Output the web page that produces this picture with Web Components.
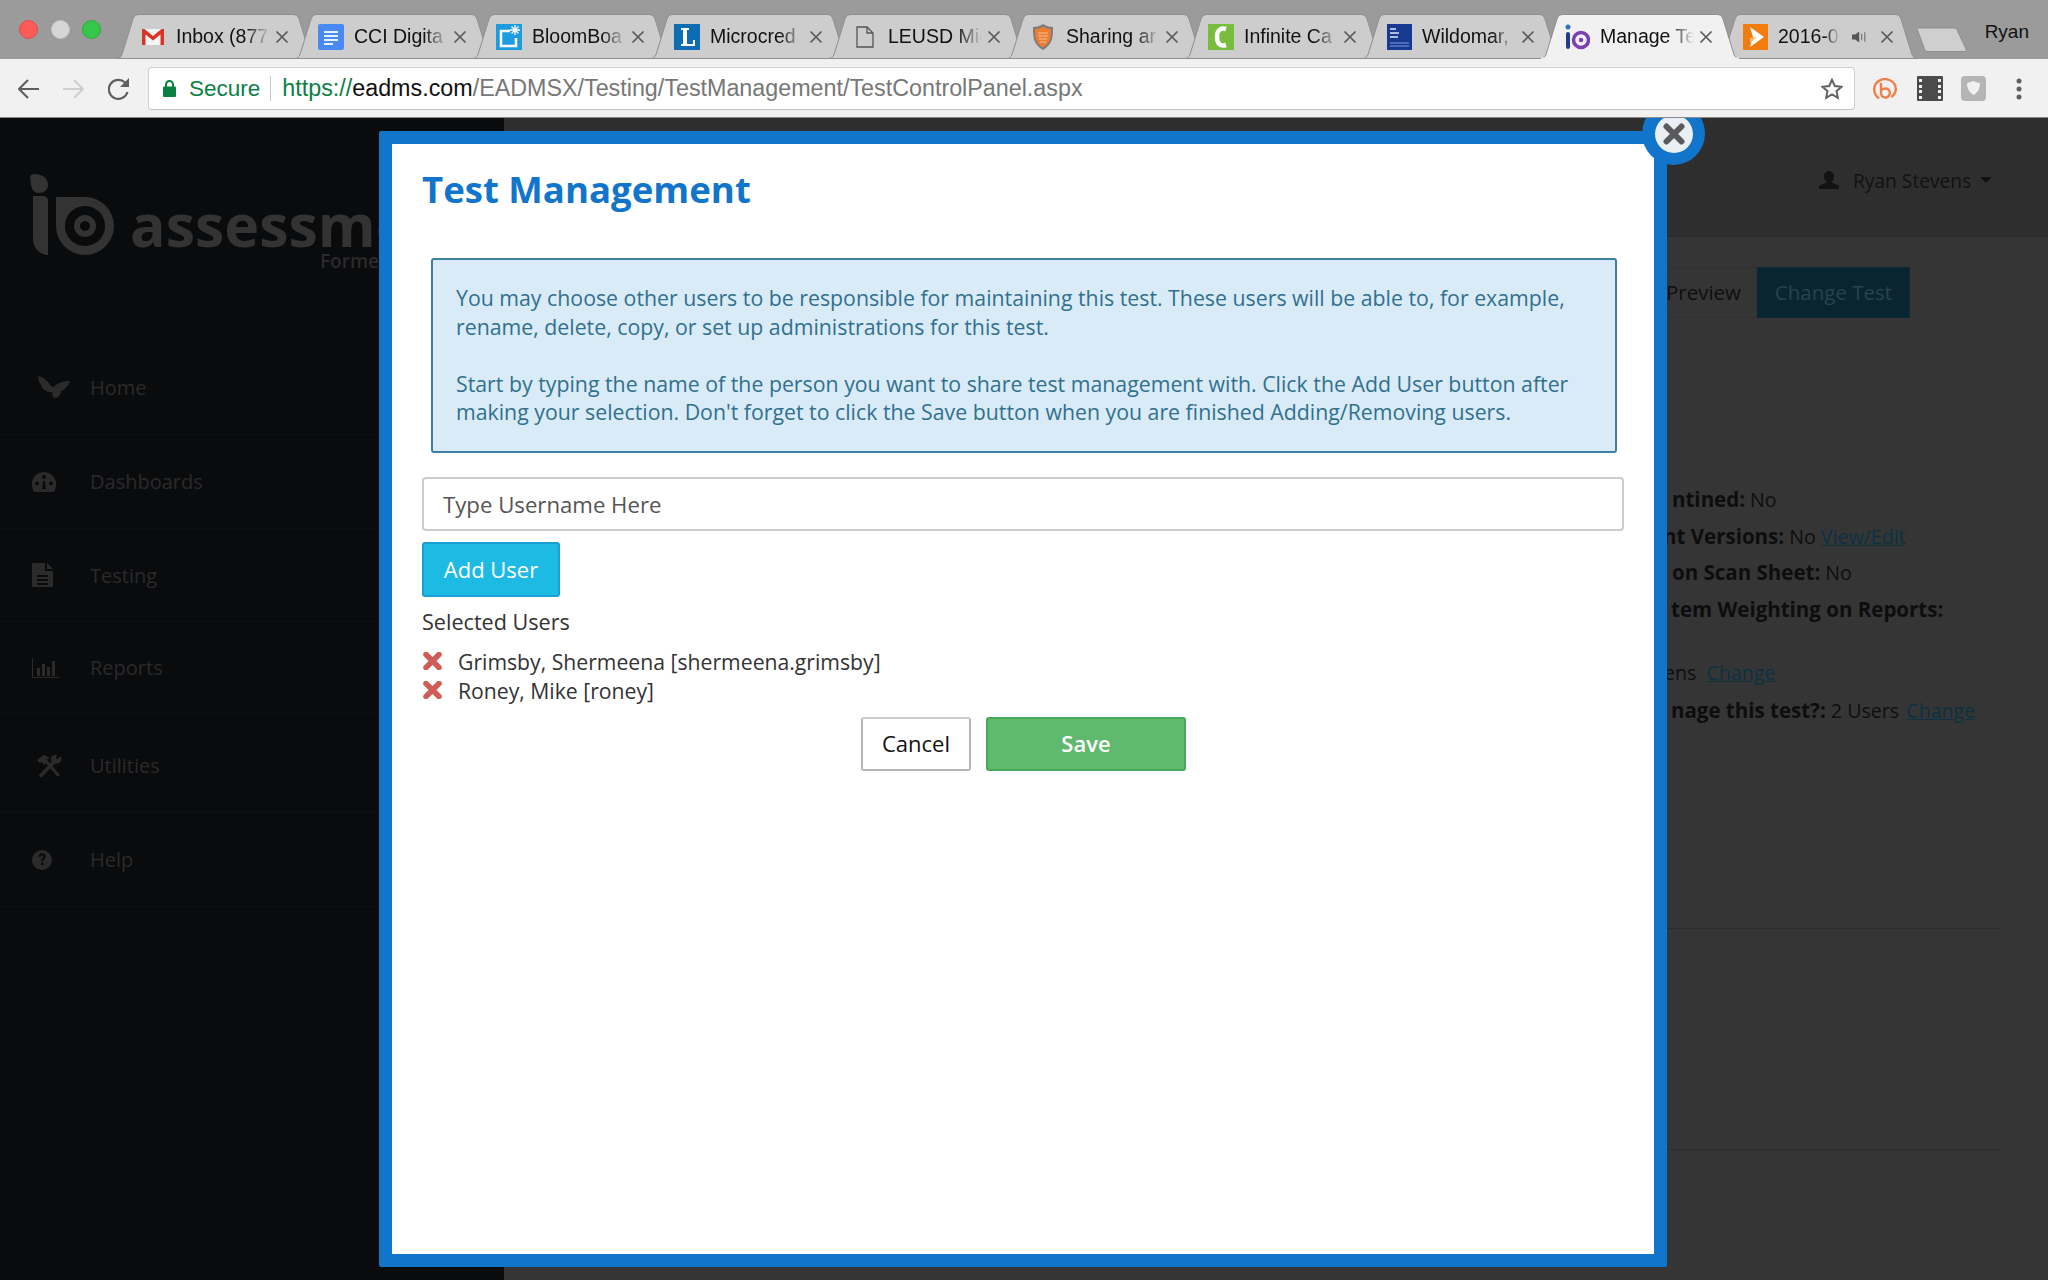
<!DOCTYPE html>
<html>
<head>
<meta charset="utf-8">
<title>Manage Test</title>
<style>
  html, body { margin: 0; padding: 0; width: 2048px; height: 1280px; overflow: hidden; background: #353535; }
  app-page { font-family: "Open Sans", sans-serif; }
</style>
</head>
<body>
<tab-strip>
  <browser-tab label="Inbox (877" icon="gmail"></browser-tab>
  <browser-tab label="CCI Digita" icon="docs"></browser-tab>
  <browser-tab label="BloomBoa" icon="bloom"></browser-tab>
  <browser-tab label="Microcred" icon="micro"></browser-tab>
  <browser-tab label="LEUSD Mic" icon="page"></browser-tab>
  <browser-tab label="Sharing ar" icon="shield"></browser-tab>
  <browser-tab label="Infinite Ca" icon="campus"></browser-tab>
  <browser-tab label="Wildomar," icon="weather"></browser-tab>
  <browser-tab label="Manage Te" icon="io" active></browser-tab>
  <browser-tab label="2016-0" icon="play" audio></browser-tab>
</tab-strip>
<browser-toolbar></browser-toolbar>
<app-page>
  <app-sidebar>
    <nav-item icon="home" h="95">Home</nav-item>
    <nav-item icon="gauge" h="94">Dashboards</nav-item>
    <nav-item icon="file" h="93">Testing</nav-item>
    <nav-item icon="chart" h="92">Reports</nav-item>
    <nav-item icon="tools" h="99" style="padding-top:5px">Utilities</nav-item>
    <nav-item icon="help" h="94">Help</nav-item>
  </app-sidebar>
  <app-main>
    <info-row style="--x:12px"><b>ntined:</b> No</info-row>
    <info-row style="--x:3px"><b>nt Versions:</b> No <a>View/Edit</a></info-row>
    <info-row style="--x:12px"><b>on Scan Sheet:</b> No</info-row>
    <info-row style="--x:11px"><b>tem Weighting on Reports:</b></info-row>
    <info-row style="--x:4px;margin-top:28px">ens&nbsp; <a>Change</a></info-row>
    <info-row style="--x:11px"><b>nage this test?:</b> 2 Users&nbsp; <a style="margin-left:-3px">Change</a></info-row>
  </app-main>
  <test-modal>
    <span slot="title">Test Management</span>
    <p>You may choose other users to be responsible for maintaining this test. These users will be able to, for example,<br>rename, delete, copy, or set up administrations for this test.</p>
    <p>Start by typing the name of the person you want to share test management with. Click the Add User button after<br>making your selection. Don't forget to click the Save button when you are finished Adding/Removing users.</p>
    <user-row slot="users">Grimsby, Shermeena [shermeena.grimsby]</user-row>
    <user-row slot="users">Roney, Mike [roney]</user-row>
  </test-modal>
</app-page>

<script>
const FAVICONS = {
  gmail: `<svg width="24" height="18" viewBox="0 0 24 18"><path d="M1 1h22v16H1z" fill="#f4f4f4"/><path d="M1 17V1h2.500L12 8l8.500-7H23v16h-3.500V6.500L12 12.500 4.500 6.500V17z" fill="#d8352a"/></svg>`,
  docs: `<svg width="26" height="26" viewBox="0 0 26 26"><rect width="26" height="26" rx="2" fill="#4a88f2"/><path d="M6 8h14M6 12h14M6 16h14M6 20h9" stroke="#e8f0fe" stroke-width="2"/></svg>`,
  bloom: `<svg width="26" height="26" viewBox="0 0 26 26"><rect width="26" height="26" fill="#1d9ce0"/><path d="M14 7H5v15h15v-8" fill="none" stroke="#fff" stroke-width="2.500"/><path d="M19 1v10M14 6h10M15.500 2.500l7 7M22.500 2.500l-7 7" stroke="#fff" stroke-width="1.300"/></svg>`,
  micro: `<svg width="26" height="26" viewBox="0 0 26 26"><rect width="26" height="26" fill="#0d6db3"/><path d="M7 4h8v2h-2v14h6v-4h2v6H7v-2h2V6H7z" fill="#fff"/></svg>`,
  page: `<svg width="18" height="22" viewBox="0 0 18 22"><path d="M1 1h10l6 6v14H1zM11 1v6h6" fill="none" stroke="#555" stroke-width="1.300"/></svg>`,
  shield: `<svg width="22" height="26" viewBox="0 0 22 26"><path d="M1 3c4 0 7-1 10-3 3 2 6 3 10 3 0 10 0 17-10 23C1 20 1 13 1 3z" fill="#7b7b7b"/><path d="M3 5c3 0 6-1 8-2.500 2 1.500 5 2.500 8 2.500 0 8 0 14-8 18.500C3 19 3 13 3 5z" fill="#ed7d31"/><path d="M6 9h10M6 12h10M7 15h8M8 18h6" stroke="#f6c29a" stroke-width="1"/></svg>`,
  campus: `<svg width="26" height="26" viewBox="0 0 26 26"><rect width="26" height="26" fill="#79bd3e"/><path d="M18 5c-6-2-9 2-9 8s3 10 9 8" fill="none" stroke="#fff" stroke-width="4.500"/></svg>`,
  weather: `<svg width="25" height="26" viewBox="0 0 25 26"><rect width="25" height="26" fill="#17398f"/><path d="M3 5h6M3 9h9M3 13h8" stroke="#dfe6f7" stroke-width="1.500"/><path d="M3 19h19M3 22h19" stroke="#5f7ccb" stroke-width="1.500"/></svg>`,
  io: `<svg width="25" height="26" viewBox="0 0 25 26"><circle cx="3" cy="3" r="2.500" fill="#2f6fc0"/><rect x="1" y="8" width="4" height="17" rx="2" fill="#263a8c"/><circle cx="16" cy="16" r="7.500" fill="none" stroke="#7a3fb0" stroke-width="3.500"/><circle cx="16" cy="16" r="2.200" fill="#7a3fb0"/></svg>`,
  play: `<svg width="25" height="26" viewBox="0 0 25 26"><rect width="25" height="26" rx="1" fill="#f07d0e"/><path d="M7 3l14 10L7 23l3-10z" fill="#fff"/><path d="M7 14l7-1-7 6z" fill="#f7b77c"/></svg>`
};

const NAV_ICONS = {
  home: `<svg width="32" height="22" viewBox="0 0 32 22" style="margin-left:6px"><path d="M0 0c5 1 10 5 14 11l2 0c3-4 9-6 16-6-2 5-5 9-9 10 0 4-3 7-6 7-2 0-3-3-3-6-5 1-10-3-11-7C1 6 0 3 0 0z" fill="#2b2b2b"/></svg>`,
  gauge: `<svg width="24" height="20" viewBox="0 0 24 20"><path fill-rule="evenodd" d="M12 0a12 12 0 0 1 12 12c0 3-1 6-2 8H2c-1-2-2-5-2-8A12 12 0 0 1 12 0zM5 9.500a2 2 0 1 0 .01 0zM12 3a2 2 0 1 0 .01 0zM19 9.500a2 2 0 1 0 .01 0zM10 17h4l-1-8h-2z" fill="#2b2b2b"/></svg>`,
  file: `<svg width="21" height="24" viewBox="0 0 21 24"><path fill-rule="evenodd" d="M1 0h12v8h8v15a1 1 0 0 1-1 1H1a1 1 0 0 1-1-1V1a1 1 0 0 1 1-1zM5 12v2h11v-2zM5 16v2h11v-2zM5 20v2h11v-2z" fill="#2b2b2b"/><path d="M15 0l6 6h-6z" fill="#2b2b2b"/></svg>`,
  chart: `<svg width="27" height="20" viewBox="0 0 27 20"><path d="M.5 0v19.500H27" fill="none" stroke="#2b2b2b" stroke-width="1"/><path d="M5 10h3v8H5zM10 6h3v12h-3zM15 9h3v9h-3zM20 3h3v15h-3z" fill="#2b2b2b"/></svg>`,
  tools: `<svg width="25" height="22" viewBox="0 0 25 22" style="margin-left:5px"><path d="M4 20.500L16 8" stroke="#2b2b2b" stroke-width="3.500" stroke-linecap="round"/><path d="M21 20L9 6" stroke="#2b2b2b" stroke-width="3" stroke-linecap="round"/><path d="M0 5l7-5 6 3-3 1 1 3-4 3-2-3-2 1z" fill="#2b2b2b"/><path d="M24 1l-3 3-2-1 1-3c-3-.5-6 1-6 4 0 2 .5 3 2 4 2 1 6 1 7.500-1.500C24.500 5 25 3 24 1z" fill="#2b2b2b"/></svg>`,
  help: `<svg width="20" height="20" viewBox="0 0 20 20"><path fill-rule="evenodd" d="M10 0a10 10 0 1 1 0 20 10 10 0 0 1 0-20zM6.500 7h2.300c0-1 .5-1.500 1.300-1.500s1.300.5 1.300 1.200c0 1.500-2.500 1.700-2.500 4.300h2.300c0-1.800 2.600-2.100 2.600-4.500 0-2-1.700-3.300-3.800-3.300C7.900 3.200 6.500 4.800 6.500 7zM9 12.500V15h2.400v-2.500z" fill="#2b2b2b"/></svg>`
};

function render(el, html) {
  el.attachShadow({ mode: 'open' }).innerHTML = html;
}

class TabStrip extends HTMLElement {
  connectedCallback() {
    render(this, `<style>
      :host { display: flex; height: 59px; background: #9b9b9b; padding-left: 116px; box-sizing: border-box; align-items: flex-end; position: relative; font-family: "Liberation Sans", Arial, sans-serif; }
      .lights { position: absolute; left: 19px; top: 20px; display: flex; gap: 12.500px; }
      .lights i { width: 19px; height: 19px; border-radius: 50%; display: block; box-sizing: border-box; }
      .newtab { width: 50px; height: 25px; margin: 0 0 7px 21px; flex: none; }
      .who { position: absolute; right: 19px; top: 20px; font-size: 19px; line-height: 24px; color: #111; }
    </style>
    <div class="lights">
      <i style="background:#fc5b57;border:1px solid #e24b47"></i>
      <i style="background:#d6d6d6;border:1px solid #c4c4c4"></i>
      <i style="background:#35c749;border:1px solid #2cad3d"></i>
    </div>
    <slot></slot>
    <svg class="newtab" viewBox="0 0 50 25"><path d="M1 1h36c2 0 3 1 3.500 3L49 22c.5 2 0 2.500-2 2.500H11c-2 0-3-1-3.500-2.500L.5 3C0 2 0 1 1 1z" fill="#cfcfcf" stroke="#8f8f8f"/></svg>
    <div class="who">Ryan</div>`);
  }
}

class BrowserTab extends HTMLElement {
  connectedCallback() {
    const active = this.hasAttribute('active');
    const audio = this.hasAttribute('audio');
    render(this, `<style>
      :host { display: block; position: relative; width: 200px; height: 45px; margin-right: -22px; flex: none; z-index: ${active ? 2 : 1}; font-size: 19.500px; color: #111; }
      .shape { position: absolute; inset: 0; }
      .row { position: relative; height: 100%; display: flex; align-items: center; padding: 1px 0 0 24px; box-sizing: border-box; }
      .icon { width: 26px; display: flex; justify-content: center; flex: none; margin-right: 10px; }
      .title { width: ${audio ? 66 : 100}px; margin-top: -2px; overflow: hidden; white-space: nowrap; flex: none; -webkit-mask-image: linear-gradient(90deg, #000 70%, transparent 94%); mask-image: linear-gradient(90deg, #000 70%, transparent 94%); }
      .audio { margin-left: 8px; flex: none; display: block; }
      .x { width: 14px; height: 14px; margin-left: ${audio ? 12 : -1}px; flex: none; }
    </style>
    <svg class="shape" viewBox="0 0 200 45" preserveAspectRatio="none">
      <path d="M0 44.500c3 0 5-1 6-4L17 5c1-3 3-4.500 6-4.500h154c3 0 5 1.500 6 4.500l11 35.500c1 3 3 4 6 4z" fill="${active ? '#f1f1f1' : '#cdcdcd'}" stroke="#8f8f8f" stroke-width="1"/>
      ${active ? '<path d="M1 44.500h198" stroke="#f1f1f1" stroke-width="2"/>' : ''}
    </svg>
    <div class="row">
      <span class="icon">${FAVICONS[this.getAttribute('icon')]}</span>
      <span class="title">${this.getAttribute('label')}</span>
      ${audio ? '<svg class="audio" width="16" height="14" viewBox="0 0 20 14"><path d="M0 4h4l5-4v14l-5-4H0z" fill="#555"/><path d="M12 3v8M16 1v12" stroke="#777" stroke-width="1.500"/></svg>' : ''}
      <svg class="x" viewBox="0 0 14 14"><path d="M1.500 1.500l11 11M12.500 1.500l-11 11" stroke="#5a5a5a" stroke-width="1.700"/></svg>
    </div>`);
  }
}

class BrowserToolbar extends HTMLElement {
  connectedCallback() {
    render(this, `<style>
      :host { display: flex; align-items: center; height: 59px; background: #f1f1f1; padding: 1px 0 0 18px; box-sizing: border-box; border-bottom: 1px solid #8a8a8a; font-family: "Liberation Sans", Arial, sans-serif; }
      .nav { display: flex; align-items: center; gap: 22px; flex: none; }
      .nav svg:last-child { margin-left: 2px; }
      .omni { flex: none; width: 1707px; height: 43px; margin-left: 18px; background: #fff; border: 1px solid #cfcfcf; border-bottom-color: #c2c2c2; border-radius: 4px; box-sizing: border-box; display: flex; align-items: center; padding-left: 14px; font-size: 23.300px; white-space: nowrap; }
      .secure { color: #0b8043; margin-left: 13px; font-size: 22.500px; }
      .sep { width: 1px; height: 25px; background: #c9c9c9; margin: 0 11px 0 10px; }
      .https { color: #0b8043; }
      .host { color: #111; }
      .path { color: #777; }
      .star { margin-left: auto; margin-right: 11px; }
      .ext { display: flex; align-items: center; margin-left: 18px; flex: none; }
    </style>
    <div class="nav">
      <svg width="22" height="20" viewBox="0 0 22 20"><path d="M21 10H2M10 1l-9 9 9 9" fill="none" stroke="#5f5f5f" stroke-width="2"/></svg>
      <svg width="22" height="20" viewBox="0 0 22 20"><path d="M1 10h19M12 1l9 9-9 9" fill="none" stroke="#cfcfcf" stroke-width="2"/></svg>
      <svg width="22" height="24" viewBox="0 0 22 24"><path d="M19.500 15a9.500 9.500 0 1 1-2.500-9.500L20 8" fill="none" stroke="#5f5f5f" stroke-width="2.200"/><path d="M21 1v9h-9z" fill="#5f5f5f"/></svg>
    </div>
    <div class="omni">
      <svg width="13" height="17" viewBox="0 0 13 17"><path d="M3 7V4.500a3.500 3.500 0 0 1 7 0V7" fill="none" stroke="#0b8043" stroke-width="2"/><rect y="6.500" width="13" height="10.500" rx="1" fill="#0b8043"/></svg>
      <span class="secure">Secure</span><span class="sep"></span>
      <span><span class="https">https://</span><span class="host">eadms.com</span><span class="path">/EADMSX/Testing/TestManagement/TestControlPanel.aspx</span></span>
      <svg class="star" width="22" height="22" viewBox="0 0 22 22"><path d="M11 1.800l2.800 6.200 6.700.7-5 4.500 1.400 6.600L11 16.400l-5.900 3.400 1.400-6.600-5-4.500 6.700-.7z" fill="none" stroke="#5f5f5f" stroke-width="1.900"/></svg>
    </div>
    <div class="ext">
      <svg width="24" height="22" viewBox="0 0 24 22"><path d="M6 20.500C2.500 18 1.200 15 1.200 11a10.800 9.800 0 1 1 17 8" fill="none" stroke="#ef7f4a" stroke-width="2.400"/><path d="M8 5v11a4.500 4.500 0 1 0 1-4" fill="none" stroke="#ef7f4a" stroke-width="2.400"/></svg>
      <svg style="margin-left:20px" width="26" height="25" viewBox="0 0 26 25"><path fill-rule="evenodd" d="M1 0h24a1 1 0 0 1 1 1v23a1 1 0 0 1-1 1H1a1 1 0 0 1-1-1V1a1 1 0 0 1 1-1zM2 3v3h3V3zM2 9v3h3V9zM2 14v3h3v-3zM2 20v3h3v-3zM21 3v3h3V3zM21 9v3h3V9zM21 14v3h3v-3zM21 20v3h3v-3z" fill="#4b4b4b"/></svg>
      <svg style="margin-left:18px" width="25" height="25" viewBox="0 0 25 25"><rect width="25" height="25" rx="4" fill="#b5b5b5"/><path d="M12.500 5c3 1.500 6 1.500 6.500 2.500 0 5-2 9-6.500 11.500C8 16 6 12 6 7.500 7 6.500 10 6 12.500 5z" fill="#f1f1f1"/></svg>
      <svg style="margin-left:26px" width="14" height="22" viewBox="0 0 14 22"><circle cx="7" cy="3" r="2.500" fill="#5f5f5f"/><circle cx="7" cy="11" r="2.500" fill="#5f5f5f"/><circle cx="7" cy="19" r="2.500" fill="#5f5f5f"/></svg>
    </div>`);
  }
}

class AppPage extends HTMLElement {
  connectedCallback() {
    render(this, `<style>
      :host { display: flex; position: relative; height: 1162px; overflow: hidden; background: #353535; }
    </style><slot></slot>`);
  }
}

class AppSidebar extends HTMLElement {
  connectedCallback() {
    render(this, `<style>
      :host { display: block; width: 504px; flex: none; height: 100%; background: #0a0b0d; overflow: hidden; }
      .logo { height: 222px; box-sizing: border-box; padding: 56px 0 0 30px; position: relative; white-space: nowrap; display: flex; align-items: flex-start; }
      .word { font-size: 59px; font-weight: 700; color: #333; line-height: 40px; margin: 30px 0 0 15px; }
      .former { position: absolute; left: 320px; top: 131px; font-size: 19px; line-height: 24px; font-weight: 600; color: #2a2a2a; }
    </style>
    <div class="logo">
      <svg width="85" height="82" viewBox="0 0 85 82">
        <path d="M0 3c0-2 2-3 5-3 8 0 13 5 13 11 0 5-4 8-9 8-5 0-7-3-8-8z" fill="#333"/>
        <path d="M3 22h10c3 0 5 2 5 5v54C10 81 3 74 3 65z" fill="#333"/>
        <path fill-rule="evenodd" d="M27 23h28a29 29 0 1 1-29 29V25c0-1 0-2 1-2zM55 32a20 20 0 1 0 .01 0zM55 41a11 11 0 1 1-.01 0zM55 47a5 5 0 1 0 .01 0z" fill="#333"/>
      </svg>
      <span class="word">assessme</span>
      <span class="former">Forme</span>
    </div>
    <slot></slot>`);
  }
}

class NavItem extends HTMLElement {
  connectedCallback() {
    render(this, `<style>
      :host { display: flex; align-items: center; height: ${this.getAttribute('h')}px; box-sizing: border-box; border-bottom: 1px solid #0e0f12; padding-left: 32px; font-size: 20px; color: #2a2a2a; }
      .ic { width: 58px; flex: none; display: flex; align-items: center; }
    </style>
    <span class="ic">${NAV_ICONS[this.getAttribute('icon')]}</span><slot></slot>`);
  }
}

class AppMain extends HTMLElement {
  connectedCallback() {
    render(this, `<style>
      :host { display: block; flex: 1; min-width: 0; font-size: 19.600px; color: #0e0e0e; white-space: nowrap; }
      .head { height: 119px; box-sizing: border-box; background: #2e2e2e; border-bottom: 1px solid #2a2a2a; display: flex; align-items: center; padding: 6px 0 0 1315px; gap: 14px; color: #121212; font-size: 19.200px; }
      .caret { width: 0; height: 0; border: 6px solid transparent; border-top-color: #121212; border-bottom: 0; margin-left: -5px; }
      .actions { display: flex; margin: 30px 0 0 1090px; height: 51px; font-size: 20.500px; line-height: 49px; }
      .preview { width: 163px; box-sizing: border-box; text-align: right; padding-right: 15px; border: 1px solid #303030; color: #0f0f0f; }
      .change { width: 153px; box-sizing: border-box; background: #0a2530; border: 1px solid #0b2a36; color: #28434e; text-align: center; }
      .body { padding: 163px 0 0 1156px; line-height: 36.600px; }
      hr { border: 0; height: 1px; background: #2c2c2c; margin: 0 48px 0 0; }
    </style>
    <div class="head">
      <svg width="20" height="18" viewBox="0 0 20 18"><path d="M10 0c3 0 5 2.500 5 5.500 0 2-1 4-2.300 5 0 1 .8 1.500 2.300 2 2 .8 5 1.700 5 3.500v2H0v-2c0-1.800 3-2.700 5-3.500 1.500-.5 2.300-1 2.300-2C6 9.500 5 7.500 5 5.500 5 2.500 7 0 10 0z" fill="#121212"/></svg>
      <span>Ryan Stevens</span><span class="caret"></span>
    </div>
    <div class="actions"><div class="preview">Preview</div><div class="change">Change Test</div></div>
    <div class="body"><slot></slot></div>
    <hr style="margin-top:199px"><hr style="margin-top:220px">`);
  }
}

class InfoRow extends HTMLElement {
  connectedCallback() {
    render(this, `<style>
      :host { display: block; height: 36.600px; padding-left: var(--x, 8px); }
      ::slotted(a) { color: #0a3242; text-decoration: underline; }
      ::slotted(b) { color: #0d0d0d; font-size: 20.500px; }
    </style><slot></slot>`);
  }
}

class TestModal extends HTMLElement {
  connectedCallback() {
    render(this, `<style>
      :host { position: absolute; left: 379px; top: 13px; width: 1288px; height: 1136px; display: block; font-size: 22px; line-height: 28.600px; color: #333; }
      .box { height: 100%; box-sizing: border-box; background: #fff; border: 13px solid #1275cc; border-radius: 2px; padding: 23px 30px 0; }
      h1 { margin: 0 0 47px; font-size: 36.600px; line-height: 44px; font-weight: 700; color: #1275cc; }
      .alert { margin: 0 7px 24px 9px; box-sizing: border-box; height: 195px; background: #d9ebf6; border: 2px solid #3f7fa3; border-radius: 3px; padding: 24px 23px 0; color: #31708f; font-size: 21.300px; white-space: nowrap; }
      ::slotted(p) { margin: 0 0 28.600px; }
      .input { height: 54px; box-sizing: border-box; border: 2px solid #ccc; border-radius: 4px; padding: 0 19px; line-height: 51px; color: #555; font-size: 22.200px; }
      .add { display: block; width: 138px; height: 55px; margin-top: 11px; box-sizing: border-box; background: #1dbae4; border: 2px solid #1b9fd6; border-radius: 3px; color: #fff; font-size: 22px; line-height: 51px; text-align: center; }
      .sel { margin: 11px 0 11px; font-size: 21.600px; }
      .foot { display: flex; justify-content: center; gap: 15px; margin-top: 11px; padding-left: 1px; }
      .btn { height: 54px; box-sizing: border-box; border-radius: 3px; line-height: 49px; text-align: center; }
      .cancel { width: 110px; background: #fff; border: 2px solid #b5b5b5; color: #111; border-top-color: #ccc; }
      .save { width: 200px; background: #5fb96e; border: 2px solid #4ba85a; color: #fff; font-weight: 600; }
      .close { position: absolute; right: -38px; top: -29px; width: 63px; height: 63px; border-radius: 50%; background: #1275cc; display: flex; align-items: center; justify-content: center; }
      .close span { width: 38px; height: 38px; border-radius: 50%; background: #e9eff4; display: flex; align-items: center; justify-content: center; }
    </style>
    <div class="box">
      <h1><slot name="title"></slot></h1>
      <div class="alert"><slot></slot></div>
      <div class="input">Type Username Here</div>
      <div class="add">Add User</div>
      <div class="sel">Selected Users</div>
      <slot name="users"></slot>
      <div class="foot"><div class="btn cancel">Cancel</div><div class="btn save">Save</div></div>
    </div>
    <div class="close"><span><svg width="22" height="22" viewBox="0 0 22 22"><path d="M3.500 3.500l15 15M18.500 3.500l-15 15" stroke="#5a5a5a" stroke-width="6" stroke-linecap="round"/></svg></span></div>`);
  }
}

class UserRow extends HTMLElement {
  connectedCallback() {
    render(this, `<style>
      :host { display: flex; height: 29px; align-items: center; white-space: nowrap; font-size: 21.200px; }
      svg { margin: -2px 16px 0 1px; flex: none; }
    </style>
    <svg width="19" height="18" viewBox="0 0 19 18"><path d="M3 2.500l13 13M16 2.500l-13 13" stroke="#cf5c56" stroke-width="5.500" stroke-linecap="round"/></svg>
    <slot></slot>`);
  }
}

customElements.define('tab-strip', TabStrip);
customElements.define('browser-tab', BrowserTab);
customElements.define('browser-toolbar', BrowserToolbar);
customElements.define('app-page', AppPage);
customElements.define('app-sidebar', AppSidebar);
customElements.define('nav-item', NavItem);
customElements.define('app-main', AppMain);
customElements.define('info-row', InfoRow);
customElements.define('test-modal', TestModal);
customElements.define('user-row', UserRow);
</script>
</body>
</html>
